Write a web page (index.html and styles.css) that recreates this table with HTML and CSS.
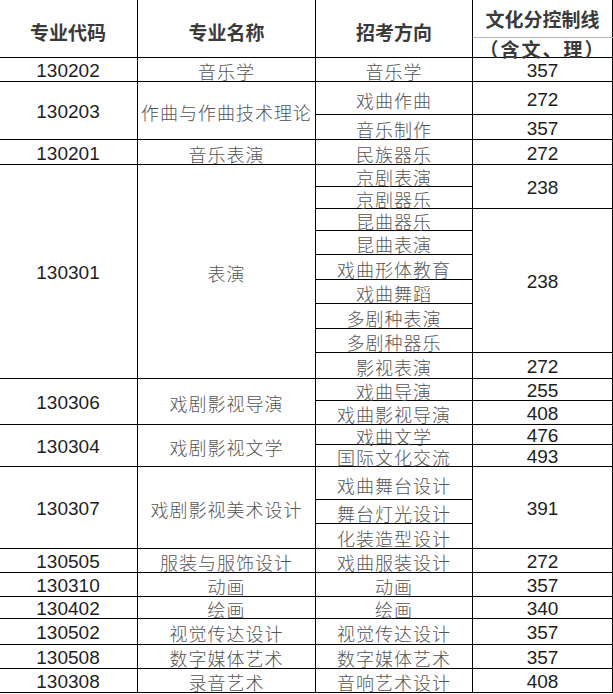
FILE: index.html
```html
<!DOCTYPE html>
<html lang="zh-CN">
<head>
<meta charset="utf-8">
<title>文化分控制线</title>
<link rel="stylesheet" href="styles.css">
</head>
<body>
<table class="score-table">
  <colgroup>
    <col class="c-code">
    <col class="c-name">
    <col class="c-dir">
    <col class="c-score">
  </colgroup>
  <tbody>
    <tr class="h38">
      <td class="head" rowspan="2">专业代码</td>
      <td class="head" rowspan="2">专业名称</td>
      <td class="head" rowspan="2">招考方向</td>
      <td class="head head-top">文化分控制线</td>
    </tr>
    <tr class="h20">
      <td class="head head-sub">（含文、理）</td>
    </tr>

    <tr class="h24">
      <td class="num">130202</td><td class="txt">音乐学</td><td class="txt">音乐学</td><td class="num">357</td>
    </tr>

    <tr class="h33">
      <td class="num" rowspan="2">130203</td><td class="txt" rowspan="2">作曲与作曲技术理论</td><td class="txt">戏曲作曲</td><td class="num">272</td>
    </tr>
    <tr class="h25">
      <td class="txt">音乐制作</td><td class="num">357</td>
    </tr>

    <tr class="h25">
      <td class="num">130201</td><td class="txt">音乐表演</td><td class="txt">民族器乐</td><td class="num">272</td>
    </tr>

    <tr class="h22">
      <td class="num" rowspan="9">130301</td><td class="txt" rowspan="9">表演</td><td class="txt">京剧表演</td><td class="num" rowspan="2">238</td>
    </tr>
    <tr class="h22"><td class="txt">京剧器乐</td></tr>
    <tr class="h22"><td class="txt">昆曲器乐</td><td class="num" rowspan="6">238</td></tr>
    <tr class="h24"><td class="txt">昆曲表演</td></tr>
    <tr class="h25"><td class="txt">戏曲形体教育</td></tr>
    <tr class="h24"><td class="txt">戏曲舞蹈</td></tr>
    <tr class="h25"><td class="txt">多剧种表演</td></tr>
    <tr class="h24"><td class="txt">多剧种器乐</td></tr>
    <tr class="h26"><td class="txt">影视表演</td><td class="num">272</td></tr>

    <tr class="h22">
      <td class="num" rowspan="2">130306</td><td class="txt" rowspan="2">戏剧影视导演</td><td class="txt">戏曲导演</td><td class="num">255</td>
    </tr>
    <tr class="h24"><td class="txt">戏曲影视导演</td><td class="num">408</td></tr>

    <tr class="h20">
      <td class="num" rowspan="2">130304</td><td class="txt" rowspan="2">戏剧影视文学</td><td class="txt">戏曲文学</td><td class="num">476</td>
    </tr>
    <tr class="h22"><td class="txt">国际文化交流</td><td class="num">493</td></tr>

    <tr class="h33">
      <td class="num" rowspan="3">130307</td><td class="txt" rowspan="3">戏剧影视美术设计</td><td class="txt">戏曲舞台设计</td><td class="num" rowspan="3">391</td>
    </tr>
    <tr class="h24"><td class="txt">舞台灯光设计</td></tr>
    <tr class="h25"><td class="txt">化装造型设计</td></tr>

    <tr class="h24">
      <td class="num">130505</td><td class="txt">服装与服饰设计</td><td class="txt">戏曲服装设计</td><td class="num">272</td>
    </tr>
    <tr class="h24">
      <td class="num">130310</td><td class="txt">动画</td><td class="txt">动画</td><td class="num">357</td>
    </tr>
    <tr class="h22">
      <td class="num">130402</td><td class="txt">绘画</td><td class="txt">绘画</td><td class="num">340</td>
    </tr>
    <tr class="h26">
      <td class="num">130502</td><td class="txt">视觉传达设计</td><td class="txt">视觉传达设计</td><td class="num">357</td>
    </tr>
    <tr class="h24">
      <td class="num">130508</td><td class="txt">数字媒体艺术</td><td class="txt">数字媒体艺术</td><td class="num">357</td>
    </tr>
    <tr class="h24">
      <td class="num">130308</td><td class="txt">录音艺术</td><td class="txt">音响艺术设计</td><td class="num">408</td>
    </tr>
  </tbody>
</table>
</body>
</html>
```

FILE: styles.css
```css
html, body {
  margin: 0;
  padding: 0;
  background: #ffffff;
  overflow: hidden;
}

.score-table {
  border-collapse: collapse;
  table-layout: fixed;
  width: 614px;
  margin-left: -2px;
  margin-top: -1px;
}

.c-code { width: 139px; }
.c-name { width: 178px; }
.c-dir { width: 157px; }
.c-score { width: 140px; }

.score-table td {
  border: 1px solid #000;
  padding: 0;
  text-align: center;
  vertical-align: middle;
  overflow: visible;
  white-space: nowrap;
}

.h20 { height: 20px; }
.h22 { height: 22px; }
.h24 { height: 24px; }
.h25 { height: 25px; }
.h26 { height: 26px; }
.h33 { height: 33px; }
.h38 { height: 38px; }

.head {
  font-family: "Noto Sans CJK SC", sans-serif;
  font-weight: 700;
  font-size: 19px;
  line-height: 20px;
  color: #3a3a3a;
  padding-top: 6px !important;
}

.score-table td.head-top {
  border-bottom: 1px solid #b5b5b5;
  padding-top: 0 !important;
}

.score-table td.head-sub {
  border-top: 1px solid #b5b5b5;
  padding-top: 3px !important;
  line-height: 16px;
  letter-spacing: 2px;
}

.num {
  font-family: "Liberation Sans", Arial, sans-serif;
  font-size: 19px;
  line-height: 17px;
  color: #1e1e1e;
  padding-top: 2px !important;
}

.txt {
  font-family: "Noto Sans CJK SC", sans-serif;
  font-weight: 300;
  font-size: 18px;
  letter-spacing: 1px;
  line-height: 16px;
  color: #555;
  padding-top: 3px !important;
}
```
